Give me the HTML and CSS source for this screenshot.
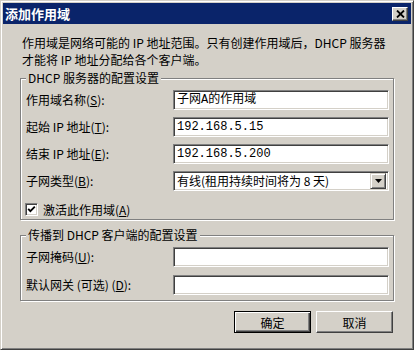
FILE: index.html
```html
<!DOCTYPE html>
<html lang="zh-CN">
<head>
  <meta charset="UTF-8" />
  <title>添加作用域</title>
  <link rel="stylesheet" href="styles.css">
</head>
<body>
  <div class="dialog">
    <div class="titlebar">
      <span class="title">添加作用域</span>
      <button class="close" type="button">
        <svg width="9" height="8" viewBox="0 0 9 8"><path d="M1 0.5 L8 7.5 M8 0.5 L1 7.5" stroke="#000" stroke-width="1.8" fill="none"/></svg>
      </button>
    </div>

    <div class="content">
      <p class="intro">作用域是网络可能的 IP 地址范围。只有创建作用域后，DHCP 服务器<br>才能将 IP 地址分配给各个客户端。</p>

      <fieldset class="group group-server">
        <legend>DHCP 服务器的配置设置</legend>
        <div class="form">
          <label>作用域名称(<u>S</u>):</label>
          <div class="field">子网A的作用域</div>
          <label>起始 IP 地址(<u>T</u>):</label>
          <div class="field">192.168.5.15</div>
          <label>结束 IP 地址(<u>E</u>):</label>
          <div class="field">192.168.5.200</div>
          <label>子网类型(<u>B</u>):</label>
          <div class="field select">
            <span>有线(租用持续时间将为 8 天)</span>
            <span class="drop">
              <svg width="7" height="4" viewBox="0 0 7 4"><path d="M0 0 H7 L3.5 4 Z" fill="#000"/></svg>
            </span>
          </div>
        </div>
        <label class="check">
          <span class="box">
            <svg width="9" height="9" viewBox="0 0 9 9"><path d="M1.2 3.8 L3.4 6.2 L7.8 1.6" stroke="#000" stroke-width="1.8" fill="none"/></svg>
          </span>
          <span>激活此作用域(<u>A</u>)</span>
        </label>
      </fieldset>

      <fieldset class="group group-client">
        <legend>传播到 DHCP 客户端的配置设置</legend>
        <div class="form">
          <label>子网掩码(<u>U</u>):</label>
          <div class="field"></div>
          <label>默认网关 (可选) (<u>D</u>):</label>
          <div class="field"></div>
        </div>
      </fieldset>

      <div class="buttons">
        <button class="btn btn-default" type="button">确定</button>
        <button class="btn" type="button">取消</button>
      </div>
    </div>
  </div>
</body>
</html>
```

FILE: styles.css
```css
* {
  box-sizing: border-box;
}

body {
  margin: 0;
  background-color: #fff;
  color: #000;
  font-family: "Noto Sans CJK SC", sans-serif;
  font-size: 12px;
  line-height: 12px;
}

.dialog {
  width: 414px;
  height: 350px;
  padding: 2px;
  background-color: #d4d0c8;
  border: 1px solid;
  border-color: #d4d0c8 #404040 #404040 #d4d0c8;
  box-shadow: inset 1px 1px #fff, inset -1px -1px #808080;
}

.titlebar {
  height: 21px;
  display: flex;
  align-items: center;
  justify-content: space-between;
  padding: 0 3px 0 2px;
  background-color: #0a246a;
}

.title {
  color: #fff;
  font-weight: bold;
  font-size: 13px;
}

.close {
  width: 16px;
  height: 14px;
  padding: 0;
  display: flex;
  align-items: center;
  justify-content: center;
  background-color: #d4d0c8;
  border: 1px solid;
  border-color: #fff #404040 #404040 #fff;
  box-shadow: inset -1px -1px #808080;
}

.content {
  padding: 10px 17px 0 17px;
}

.intro {
  margin: 0 0 0 2px;
  line-height: 17px;
  white-space: nowrap;
}

.group {
  margin: 4px 0 0;
  min-width: 0;
  border: 1px solid #808080;
  box-shadow: 1px 1px 0 #fff, inset 1px 1px 0 #fff;
}

.group-server {
  padding: 6px 4px 3px 5px;
}

.group-client {
  margin-top: 9px;
  padding: 6px 4px 5px 5px;
}

.group legend {
  padding: 0 2px;
  background-color: #d4d0c8;
}

.form {
  display: grid;
  grid-template-columns: 147px 216px;
  row-gap: 7px;
  align-items: center;
}

.group-client .form {
  row-gap: 8px;
}

.field {
  height: 20px;
  display: flex;
  align-items: center;
  padding: 0 3px;
  background-color: #fff;
  border: 1px solid;
  border-color: #808080 #fff #fff #808080;
  box-shadow: inset 1px 1px #404040, inset -1px -1px #d4d0c8;
  font-family: "Liberation Mono", "Noto Sans CJK SC", monospace;
}

.select {
  justify-content: space-between;
  padding-right: 2px;
  font-family: "Noto Sans CJK SC", sans-serif;
}

.drop {
  width: 16px;
  height: 16px;
  display: flex;
  align-items: center;
  justify-content: center;
  background-color: #d4d0c8;
  border: 1px solid;
  border-color: #d4d0c8 #404040 #404040 #d4d0c8;
  box-shadow: inset 1px 1px #fff, inset -1px -1px #808080;
}

.check {
  display: flex;
  align-items: center;
  gap: 5px;
  height: 13px;
  margin: 12px 0 0 -1px;
}

.box {
  width: 13px;
  height: 13px;
  display: flex;
  align-items: center;
  justify-content: center;
  background-color: #fff;
  border: 1px solid;
  border-color: #808080 #fff #fff #808080;
  box-shadow: inset 1px 1px #404040, inset -1px -1px #d4d0c8;
}

.buttons {
  display: flex;
  justify-content: flex-end;
  gap: 5px;
  margin-top: 10px;
  padding-right: 1px;
}

.btn {
  width: 77px;
  height: 22px;
  padding: 0;
  font-family: "Noto Sans CJK SC", sans-serif;
  font-size: 12px;
  color: #000;
  background-color: #d4d0c8;
  border: 1px solid;
  border-color: #fff #404040 #404040 #fff;
  box-shadow: inset -1px -1px #808080;
}

.btn-default {
  border-color: #000;
  box-shadow: inset 1px 1px #fff, inset -1px -1px #404040, inset -2px -2px #808080;
}
```
